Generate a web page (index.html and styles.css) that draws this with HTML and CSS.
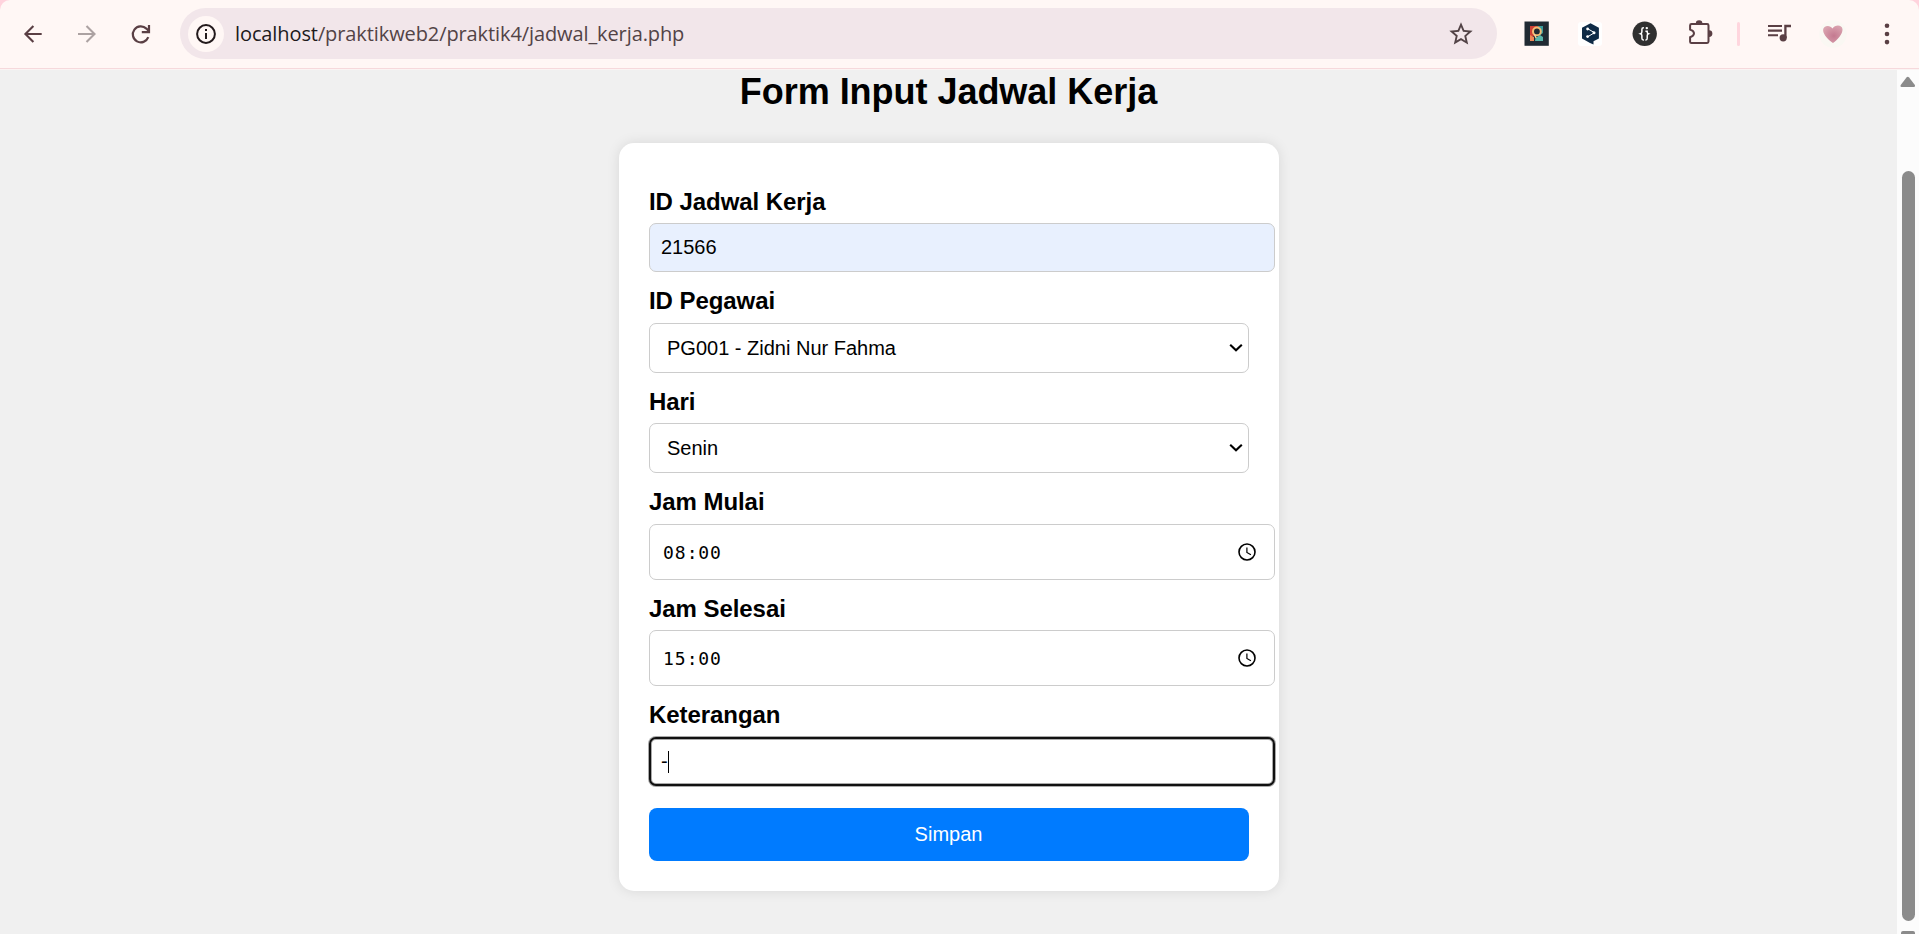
FILE: index.html
```html
<!DOCTYPE html>
<html lang="id">
<head>
<meta charset="utf-8">
<title>Form Input Jadwal Kerja</title>
<link rel="stylesheet" href="styles.css">
</head>
<body>
<div class="window">
  <header class="toolbar">
    <svg class="nav-back" width="26" height="26" viewBox="0 0 26 26"><path d="M21.7 13H5.8M13.4 5L5.4 13l8 8" fill="none" stroke="#5a3f44" stroke-width="2.1"/></svg>
    <svg class="nav-forward" width="26" height="26" viewBox="0 0 26 26"><path d="M4 13h15.9M12.5 5l8 8-8 8" fill="none" stroke="#aca2a2" stroke-width="2.1"/></svg>
    <svg class="nav-reload" width="28" height="26" viewBox="0 0 28 26"><path d="M21.3 16.2A8 8 0 1 1 19.4 7.6L22 10.3" fill="none" stroke="#5a3f44" stroke-width="2.2"/><path d="M22 4v7.2h-7.2" fill="none" stroke="#5a3f44" stroke-width="2.2"/></svg>
    <div class="omnibox">
      <span class="site-info"><svg width="20" height="20" viewBox="0 0 20 20"><circle cx="10" cy="10" r="8.9" fill="none" stroke="#231a1c" stroke-width="2"/><path d="M10 9v6M10 5v2.1" stroke="#231a1c" stroke-width="2"/></svg></span>
      <span class="url"><span class="host">localhost</span>/praktikweb2/praktik4/jadwal_kerja.php</span>
      <svg class="star" width="28" height="28" viewBox="0 0 24 24"><path fill="#524346" d="M22 9.24l-7.19-.62L12 2 9.19 8.63 2 9.24l5.46 4.73L5.82 21 12 17.27 18.18 21l-1.63-7.03L22 9.24zM12 15.4l-3.76 2.27 1-4.28-3.32-2.88 4.38-.38L12 6.1l1.71 4.04 4.38.38-3.32 2.88 1 4.28L12 15.4z"/></svg>
    </div>
    <svg class="ext-r" width="26" height="26" viewBox="0 0 26 26"><path d="M.5.5h24.3v24.3H.5z" fill="#202a33"/><path d="M6 5h9v10H6z" fill="#ce3f35"/><path d="M14 5h5v7l-4 3z" fill="#3a9b9b"/><path d="M6 14l4 2v4H6z" fill="#f08755"/><path d="M11.5 17l4.5-3 3 2v4h-8z" fill="#58b5aa"/><circle cx="12.9" cy="10.4" r="3.9" fill="#202a33" stroke="#f4bb73" stroke-width="2"/><path d="M10.3 13l1.8 4" stroke="#f4d39a" stroke-width="1.5"/></svg>
    <svg class="ext-deepl" width="26" height="26" viewBox="0 0 26 26"><rect x="1" y="1" width="24" height="24" rx="3" fill="#fff"/><path d="M13.5 2.2l8.4 4.5v10.7l-5.4 2.9v3.2L13 21.9l-8-4.5V6.7z" fill="#0f2b46"/><path d="M10.5 7.6l7 4.1-7 4.2" fill="none" stroke="#fff" stroke-width="1"/><circle cx="10.6" cy="8" r="1.4" fill="#fff"/><circle cx="17" cy="11.8" r="1.5" fill="#fff"/><circle cx="10.6" cy="15.6" r="1.4" fill="#fff"/></svg>
    <svg class="ext-json" width="26" height="26" viewBox="0 0 26 26"><circle cx="12.7" cy="12.8" r="12.2" fill="#303030"/><path d="M11.9 6.7h-.5q-1.5 0-1.5 1.6v2.5q0 1.6-1.3 2 1.3.5 1.3 2v2.5q0 1.6 1.5 1.6h.5M13.4 10.3h1.8v.9q0 1.2 1.2 1.6-1.2.5-1.2 2v2.5q0 1.6-1.3 1.6h-.5" fill="none" stroke="#fff" stroke-width="1.5"/><circle cx="14.8" cy="7.1" r="1.2" fill="#fff"/></svg>
    <svg class="ext-puzzle" width="28" height="28" viewBox="0 0 28 28"><path d="M4.5 4.1h15.6q1.4 0 1.4 1.4v16.1q0 1.4-1.4 1.4H4.4q-1.3 0-1.3-1.3v-4.4c5.2-1.8 5.2-6.2 0-7.7V5.5q0-1.4 1.4-1.4z" fill="none" stroke="#5a3f44" stroke-width="2"/><path d="M8.8 3.5a3.3 3.2 0 0 1 6.6 0zM22 10.2a3.3 3.3 0 0 1 0 6.8z" fill="#5a3f44"/></svg>
    <span class="divider"></span>
    <svg class="media" width="26" height="26" viewBox="0 0 26 26"><path d="M1 5h14M1 9.6h14M1 14.2h10" stroke="#5a3f44" stroke-width="2.1"/><path d="M18.4 17V5H24" fill="none" stroke="#5a3f44" stroke-width="2.3"/><circle cx="16.2" cy="16.8" r="3.6" fill="#5a3f44"/></svg>
    <svg class="avatar" width="28" height="28" viewBox="0 0 28 28"><defs><radialGradient id="heart" cx=".55" cy=".6" r=".6"><stop offset="0" stop-color="#c47990"/><stop offset="1" stop-color="#d9a2ae"/></radialGradient></defs><circle cx="14" cy="14" r="13.8" fill="#faf8f3"/><path d="M14 22.9C10.5 20.9 4 14.8 4.1 9.9c.2-4.4 7-5.4 9.4-1.3 2.1-4.2 9.5-4.5 10 .6.3 4.5-5 11-9.5 13.7z" fill="url(#heart)"/></svg>
    <svg class="menu" width="14" height="26" viewBox="0 0 14 26"><g fill="#5a3f44"><circle cx="7" cy="4.8" r="2.3"/><circle cx="7" cy="13" r="2.3"/><circle cx="7" cy="21.1" r="2.3"/></g></svg>
  </header>
  <div class="viewport">
    <main class="page">
      <h1 class="title">Form Input Jadwal Kerja</h1>
      <form class="card">
        <div class="field">
          <label class="label">ID Jadwal Kerja</label>
          <div class="input filled">21566</div>
        </div>
        <div class="field roomy">
          <label class="label">ID Pegawai</label>
          <div class="select">PG001 - Zidni Nur Fahma<svg width="14" height="10" viewBox="0 0 14 10"><path d="M1.2 1.7L7 7.3l5.8-5.6" fill="none" stroke="#000" stroke-width="2.1"/></svg></div>
        </div>
        <div class="field">
          <label class="label">Hari</label>
          <div class="select">Senin<svg width="14" height="10" viewBox="0 0 14 10"><path d="M1.2 1.7L7 7.3l5.8-5.6" fill="none" stroke="#000" stroke-width="2.1"/></svg></div>
        </div>
        <div class="field roomy">
          <label class="label">Jam Mulai</label>
          <div class="time"><span class="digits">08</span><span class="colon">:</span><span class="digits">00</span><svg class="clock" width="18" height="18" viewBox="0 0 18 18"><circle cx="9" cy="9" r="8" fill="none" stroke="#000" stroke-width="1.6"/><path d="M8.9 4.4v5l4 2.3" fill="none" stroke="#000" stroke-width="1.2"/></svg></div>
        </div>
        <div class="field">
          <label class="label">Jam Selesai</label>
          <div class="time"><span class="digits">15</span><span class="colon">:</span><span class="digits">00</span><svg class="clock" width="18" height="18" viewBox="0 0 18 18"><circle cx="9" cy="9" r="8" fill="none" stroke="#000" stroke-width="1.6"/><path d="M8.9 4.4v5l4 2.3" fill="none" stroke="#000" stroke-width="1.2"/></svg></div>
        </div>
        <div class="field roomy last">
          <label class="label">Keterangan</label>
          <div class="input focused">-<span class="caret"></span></div>
        </div>
        <button class="submit" type="button">Simpan</button>
      </form>
    </main>
    <aside class="scrollbar">
      <svg class="arrow" width="16" height="12" viewBox="0 0 16 12"><path d="M6.5 1.6q1.3-1.6 2.6 0l5.6 7.2q1 2-1 2.2H1.7q-2-.2-.8-2.2z" fill="#8b8b8b"/></svg>
      <span class="thumb"></span>
      <span class="arrow-down"></span>
    </aside>
  </div>
</div>
</body>
</html>
```
FILE: styles.css
```css
* { box-sizing: border-box; }
body {
  margin: 0;
  font-family: "Liberation Sans", Arial, sans-serif;
  color: #000;
}
.window {
  display: flex;
  flex-direction: column;
  width: 100%;
  height: 934px;
  overflow: hidden;
  background: #ffd3dd;
}
svg { display: block; flex: none; }

/* browser toolbar */
.toolbar {
  display: flex;
  align-items: center;
  flex: none;
  height: 70px;
  padding: 0 25px 2px 20px;
  background: linear-gradient(#fff7f5 68px, #f6d9dc 68px, #f6d9dc 69px, #fbf4f3 69px);
  border-radius: 10px 10px 0 0;
}
.nav-forward { margin-left: 28px; }
.nav-reload { margin: 0 25px 0 27px; }
.omnibox {
  display: flex;
  align-items: center;
  width: 1317px;
  height: 51px;
  padding: 0 22px 0 8px;
  margin-top: -1px;
  background: #f2e6ea;
  border-radius: 26px;
}
.site-info {
  display: flex;
  align-items: center;
  justify-content: center;
  width: 36px;
  height: 36px;
  border-radius: 50%;
  background: #fff7f5;
}
.url {
  margin-left: 11px;
  font-family: "Open Sans", "Noto Sans", sans-serif;
  font-size: 20px;
  line-height: 28px;
  letter-spacing: -0.1px;
  white-space: nowrap;
  color: #524346;
}
.host { color: #201a1b; }
.star { margin-left: auto; }
.ext-r { margin-left: 27px; }
.ext-deepl { margin-left: 27px; }
.ext-json { margin-left: 29px; }
.ext-puzzle { margin-left: 29px; }
.divider {
  width: 3px;
  height: 24px;
  margin-left: 22px;
  border-radius: 2px;
  background: #ffd6de;
}
.media { margin-left: 27px; }
.avatar { margin-left: 26px; }
.menu { margin-left: 33px; }

/* page */
.viewport {
  display: flex;
  flex: 1;
  min-height: 0;
  background: #f0f0f0;
}
.page {
  display: flex;
  flex-direction: column;
  align-items: center;
  flex: 1;
}
.title {
  margin: 1px 0 30px;
  font-size: 36px;
  line-height: 42px;
  letter-spacing: -0.03px;
  white-space: nowrap;
}
.card {
  width: 660px;
  height: 748px;
  padding: 45px 30px 30px;
  margin-left: 1px;
  border-radius: 15px;
  background: #fff;
  box-shadow: 0 0 13px rgba(0, 0, 0, 0.1);
}
.field { margin-bottom: 15px; }
.field.last { margin-bottom: 22px; }
.label {
  display: block;
  margin-bottom: 7px;
  font-size: 24px;
  font-weight: bold;
  line-height: 28px;
  letter-spacing: -0.06px;
}
.roomy .label { margin-bottom: 8px; }
.input, .select, .time {
  display: flex;
  align-items: center;
  border: 1px solid #ccc;
  border-radius: 7px;
  background: #fff;
  font-size: 20px;
}
.input, .time { width: 626px; }
.input { height: 49px; padding: 0 11px; }
.filled { background: #e8f0fe; }
.focused {
  border: 2px solid #101010;
  padding-left: 10px;
  box-shadow: 0 0 0 1px #a9a9a9, inset 0 0 0 1px #a9a9a9;
}
.caret { width: 1px; height: 22px; background: #000; }
.select {
  justify-content: space-between;
  height: 50px;
  padding: 0 5px 0 17px;
}
.time {
  height: 56px;
  padding: 0 18px 0 13px;
  font-family: "DejaVu Sans Mono", monospace;
  font-size: 18px;
}
.digits { letter-spacing: 0.8px; }
.colon { width: 12px; text-align: center; }
.clock { margin-left: auto; }
.submit {
  display: block;
  width: 600px;
  height: 53px;
  padding: 0 1px 0 0;
  border: 0;
  border-radius: 8px;
  background: #007bff;
  color: #fff;
  font-family: inherit;
  font-size: 20px;
}
.scrollbar {
  display: flex;
  flex-direction: column;
  align-items: center;
  width: 22px;
  padding-top: 6px;
  background: #fcfcfc;
}
.thumb {
  flex: none;
  width: 13px;
  height: 750px;
  margin-top: 83px;
  border-radius: 7px;
  background: #8b8b8b;
}
.arrow-down {
  flex: none;
  width: 14px;
  height: 8px;
  margin-top: 10px;
  border-radius: 2px 2px 0 0;
  background: #8b8b8b;
}
```
